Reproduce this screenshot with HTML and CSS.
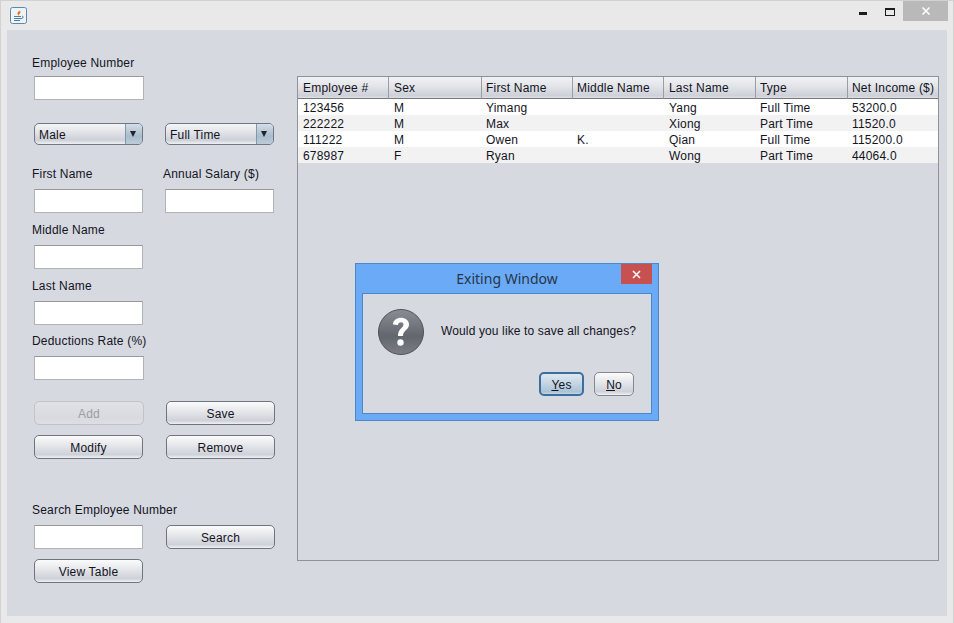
FILE: index.html
```html
<!DOCTYPE html>
<html lang="en">
<head>
    <meta charset="utf-8">
    <title>Employee Database</title>
    <link rel="stylesheet" href="styles.css">
</head>
<body>
    <div class="window">
        <div class="titlebar">
            <svg class="app-icon" width="17" height="17" viewBox="0 0 17 17">
                <rect x="0.5" y="0.5" width="16" height="16" rx="2" fill="#eef3f8" stroke="#5f87a8"/>
                <path d="M9 2.500c1 1.500-2.500 3-1.200 5 .4.6 1 .9 1.400 1-.8-1.300 2.400-2.600 1-4.500-.3.8-.8 1-1.200-1.500z" fill="#e2701f"/>
                <path d="M4 9.500h7M4 11.500h8M4 13.500h6M12 9c1.500 0 1.500 2 0 2.500" fill="none" stroke="#4f7ea6"/>
            </svg>
            <div class="controls">
                <span class="ctl-min"></span>
                <span class="ctl-max"></span>
                <span class="ctl-close">
                    <svg width="10" height="10" viewBox="0 0 10 10"><path d="M1.500 1.500l7 7M8.500 1.500l-7 7" stroke="#fff" stroke-width="1.600"/></svg>
                </span>
            </div>
        </div>
        <div class="panel">
            <div class="sidebar">
                <div class="lbl">Employee Number</div>
                <input class="field wide gap-6" type="text">

                <div class="row gap-23">
                    <div class="combo"><span>Male</span><i></i></div>
                    <div class="combo"><span>Full Time</span><i></i></div>
                </div>

                <div class="row gap-20">
                    <div class="lbl">First Name</div>
                    <div class="lbl">Annual Salary ($)</div>
                </div>
                <div class="row gap-8">
                    <input class="field" type="text">
                    <input class="field" type="text">
                </div>

                <div class="lbl gap-8">Middle Name</div>
                <input class="field gap-8" type="text">

                <div class="lbl gap-8">Last Name</div>
                <input class="field gap-8" type="text">

                <div class="lbl gap-7">Deductions Rate (%)</div>
                <input class="field wide gap-8" type="text">

                <div class="row gap-21">
                    <button class="btn wide" disabled>Add</button>
                    <button class="btn right">Save</button>
                </div>
                <div class="row gap-10">
                    <button class="btn">Modify</button>
                    <button class="btn right">Remove</button>
                </div>

                <div class="lbl gap-42">Search Employee Number</div>
                <div class="row gap-8">
                    <input class="field" type="text">
                    <button class="btn right">Search</button>
                </div>
                <button class="btn gap-10">View Table</button>
            </div>

            <div class="table-pane">
                <table>
                    <colgroup>
                        <col class="c1"><col class="c2"><col class="c3"><col class="c4"><col class="c5"><col class="c6"><col class="c7">
                    </colgroup>
                    <thead>
                        <tr><th>Employee #</th><th>Sex</th><th>First Name</th><th>Middle Name</th><th>Last Name</th><th>Type</th><th>Net Income ($)</th></tr>
                    </thead>
                    <tbody>
                        <tr><td>123456</td><td>M</td><td>Yimang</td><td></td><td>Yang</td><td>Full Time</td><td>53200.0</td></tr>
                        <tr><td>222222</td><td>M</td><td>Max</td><td></td><td>Xiong</td><td>Part Time</td><td>11520.0</td></tr>
                        <tr><td>111222</td><td>M</td><td>Owen</td><td>K.</td><td>Qian</td><td>Full Time</td><td>115200.0</td></tr>
                        <tr><td>678987</td><td>F</td><td>Ryan</td><td></td><td>Wong</td><td>Part Time</td><td>44064.0</td></tr>
                    </tbody>
                </table>
            </div>
        </div>

        <div class="dialog">
            <div class="dialog-title">
                <span>Exiting Window</span>
                <span class="dialog-close">
                    <svg width="9" height="9" viewBox="0 0 9 9"><path d="M1 1l7 7M8 1l-7 7" stroke="#fff" stroke-width="1.500"/></svg>
                </span>
            </div>
            <div class="dialog-body">
                <div class="dialog-msg">
                    <svg class="q-icon" width="46" height="46" viewBox="0 0 46 46">
                        <defs>
                            <linearGradient id="qfill" x1="0" y1="0" x2="0" y2="1">
                                <stop offset="0" stop-color="#8a8e94"/>
                                <stop offset="0.6" stop-color="#62666d"/>
                                <stop offset="1" stop-color="#7b7f85"/>
                            </linearGradient>
                        </defs>
                        <circle cx="23" cy="23" r="22.500" fill="url(#qfill)" stroke="#4d5157"/>
                        <path d="M15 15.500c0-9 16-9 16 0 0 5.500-6 5.500-6 11.500h-5c0-7.500 5.500-8 5.500-11.500 0-3-5.500-3-5.500 .5z" fill="#fff"/>
                        <circle cx="22.500" cy="33.500" r="3.200" fill="#fff"/>
                    </svg>
                    <span>Would you like to save all changes?</span>
                </div>
                <div class="dialog-btns">
                    <button class="btn btn-yes"><u>Y</u>es</button>
                    <button class="btn btn-no"><u>N</u>o</button>
                </div>
            </div>
        </div>
    </div>
</body>
</html>
```

FILE: styles.css
```css
* {
    box-sizing: border-box;
}
html, body {
    margin: 0;
    padding: 0;
}
body {
    font-family: 'Liberation Sans', Arial, sans-serif;
    font-size: 12px;
    letter-spacing: 0.2px;
    color: #14141e;
    overflow: hidden;
}
.window {
    position: relative;
    width: 954px;
    height: 623px;
    display: flex;
    flex-direction: column;
    background-color: #e9e9e9;
    border: 1px solid #d2d2d2;
    border-bottom: none;
}
.titlebar {
    height: 29px;
    display: flex;
    justify-content: space-between;
    padding-left: 9px;
    padding-top: 6px;
    flex-shrink: 0;
}
.controls {
    display: flex;
    margin-top: -6px;
    margin-right: 5px;
}
.ctl-min {
    width: 8px;
    height: 3px;
    margin-top: 11px;
    margin-right: 18px;
    background-color: #1c1c1c;
}
.ctl-max {
    width: 10px;
    height: 8px;
    margin-top: 7px;
    margin-right: 8px;
    border: 1px solid #1c1c1c;
    border-top-width: 2px;
}
.ctl-close {
    width: 45px;
    height: 20px;
    background-color: #b9b9b9;
    display: flex;
    align-items: center;
    justify-content: center;
}
.panel {
    flex: 1;
    display: flex;
    margin: 0 6px 7px 6px;
    padding: 24px 0 0 25px;
    background-color: #d6d9e0;
}
.sidebar {
    width: 265px;
    flex-shrink: 0;
    display: flex;
    flex-direction: column;
    align-items: flex-start;
}
.lbl {
    height: 16px;
    line-height: 18px;
    white-space: nowrap;
}
.row {
    display: grid;
    grid-template-columns: 131px 112px;
}
.gap-6 { margin-top: 6px; }
.gap-7 { margin-top: 7px; }
.gap-8 { margin-top: 8px; }
.gap-10 { margin-top: 10px; }
.gap-20 { margin-top: 20px; }
.gap-21 { margin-top: 21px; }
.gap-23 { margin-top: 23px; }
.gap-42 { margin-top: 42px; }
.field {
    display: block;
    width: 109px;
    height: 24px;
    margin-left: 2px;
    background-color: #fff;
    border: 1px solid #b0b3b8;
    border-top-color: #96989c;
    outline: none;
    padding: 0;
}
.field.wide {
    width: 110px;
}
.combo {
    width: 109px;
    height: 22px;
    margin-left: 2px;
    display: flex;
    justify-content: space-between;
    border: 1px solid #6d7884;
    border-radius: 5px;
    overflow: hidden;
    background: linear-gradient(#f4f5f7, #e4e6ea 35%, #ccd0d7 80%, #eef0f3);
}
.combo span {
    padding-left: 4px;
    line-height: 22px;
}
.combo i {
    width: 17px;
    position: relative;
    border-left: 1px solid #8497a8;
    background: linear-gradient(#d3dee8, #a9bccd 60%, #bccbd8);
}
.combo i::after {
    content: "";
    position: absolute;
    left: 4px;
    top: 7px;
    border-left: 3.500px solid transparent;
    border-right: 3.500px solid transparent;
    border-top: 6px solid #1f242b;
}
.btn {
    display: block;
    width: 109px;
    height: 24px;
    margin-left: 2px;
    padding: 2px 0 0 0;
    font: inherit;
    letter-spacing: inherit;
    color: inherit;
    border: 1px solid #70757c;
    border-radius: 5px;
    background: linear-gradient(#fbfbfc, #e6e8eb 40%, #ced1d8 85%, #f0f1f4);
}
.btn.wide {
    width: 110px;
}
.btn.right {
    margin-left: 3px;
}
.btn:disabled {
    color: #9a9da3;
    border-color: #c0c3c8;
    background: linear-gradient(#dfe1e6, #d8dae0 70%, #dcdee3);
}
.table-pane {
    width: 642px;
    height: 485px;
    margin: 22px 0 0 0;
    border: 1px solid #8f9296;
}
table {
    width: 640px;
    border-collapse: separate;
    border-spacing: 0;
    table-layout: fixed;
}
.c1 { width: 91px; }
.c2 { width: 93px; }
.c3 { width: 91px; }
.c4 { width: 91px; }
.c5 { width: 92px; }
.c6 { width: 92px; }
.c7 { width: 90px; }
th {
    height: 22px;
    padding: 0 0 0 5px;
    font-weight: normal;
    text-align: left;
    white-space: nowrap;
    border-right: 1px solid #9a9da3;
    border-bottom: 1px solid #74777c;
    background: linear-gradient(#f1f2f4, #e2e4e8 45%, #cdd0d7 90%, #dfe1e5);
}
th:last-child {
    border-right: none;
}
td {
    height: 16px;
    padding: 2px 0 0 5px;
    line-height: 14px;
    white-space: nowrap;
    background-color: #fff;
}
th:nth-child(3), th:nth-child(4), th:nth-child(6), th:nth-child(7),
td:nth-child(3), td:nth-child(4), td:nth-child(6), td:nth-child(7) {
    padding-left: 4px;
}
tbody tr:nth-child(even) td {
    background-color: #f2f2f2;
}
.dialog {
    position: absolute;
    left: 354px;
    top: 262px;
    width: 304px;
    height: 158px;
    display: flex;
    flex-direction: column;
    background-color: #6aaaf6;
    border: 1px solid #4c88c8;
}
.dialog-title {
    position: relative;
    height: 29px;
    flex-shrink: 0;
    text-align: center;
    font-family: 'Noto Sans', sans-serif;
    font-size: 14px;
    line-height: 29px;
    letter-spacing: 0;
    color: #27364a;
}
.dialog-close {
    position: absolute;
    right: 6px;
    top: 0;
    width: 31px;
    height: 20px;
    background-color: #c75050;
    display: flex;
    align-items: center;
    justify-content: center;
}
.dialog-body {
    flex: 1;
    margin: 0 6px 6px 6px;
    background-color: #d6d9e0;
    border: 1px solid #4c88c8;
}
.dialog-msg {
    display: flex;
    align-items: center;
    gap: 17px;
    padding: 15px 0 0 15px;
}
.dialog-msg span {
    margin-top: -3px;
    letter-spacing: 0.13px;
}
.dialog-btns {
    display: flex;
    justify-content: flex-end;
    gap: 10px;
    margin-top: 17px;
    padding-right: 17px;
}
.btn-yes {
    width: 45px;
    margin-left: 0;
    border: 2px solid #3b6f9f;
    background: linear-gradient(#dfe8f0, #c3d4e3 50%, #a9c1d6 90%, #c8d7e4);
}
.btn-no {
    width: 40px;
    margin-left: 0;
    border-color: #85898f;
}
```
